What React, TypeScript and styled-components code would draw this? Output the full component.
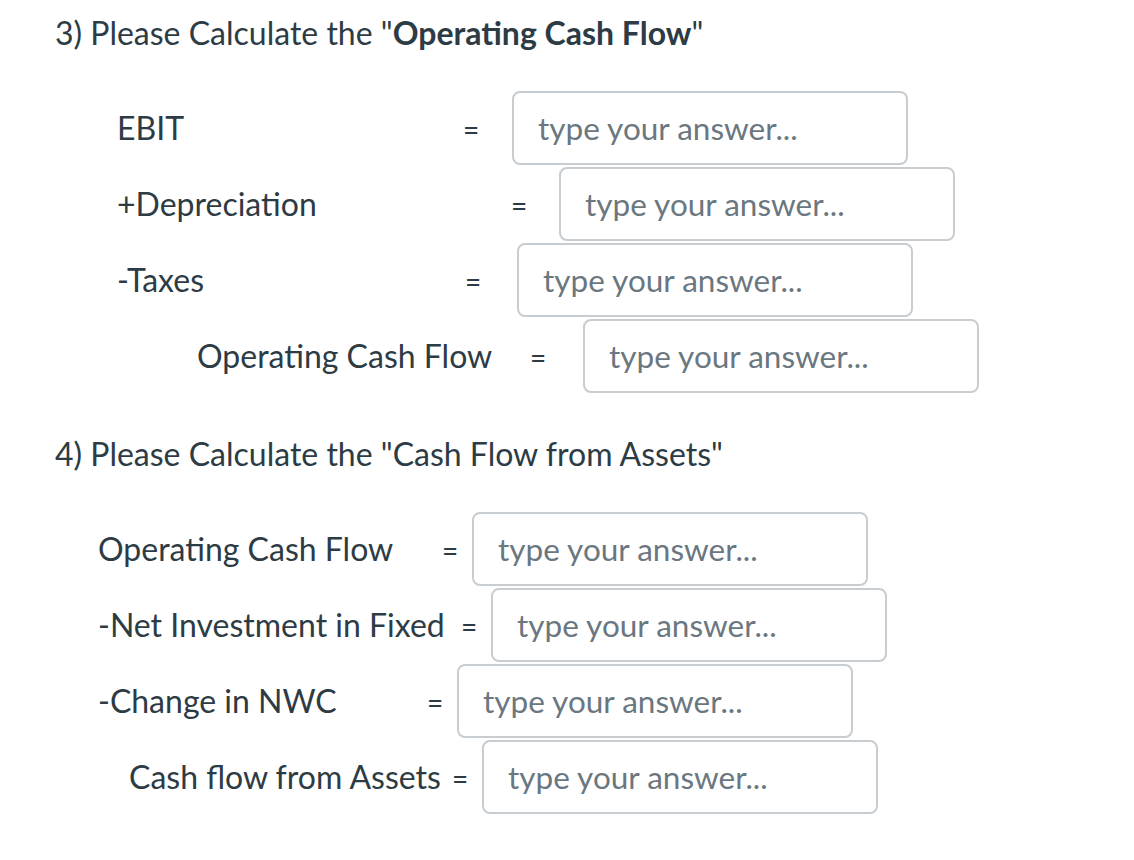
import React from 'react';
import styled, { createGlobalStyle } from 'styled-components';

interface RowData {
  label: string;
  indent: number;
  eq: number;
  input: number;
}

const cashFlowRows: RowData[] = [
  { label: 'EBIT', indent: 117, eq: 463, input: 512 },
  { label: '+Depreciation', indent: 117, eq: 511, input: 559 },
  { label: '-Taxes', indent: 117, eq: 465, input: 517 },
  { label: 'Operating Cash Flow', indent: 197, eq: 530, input: 583 },
];

const assetRows: RowData[] = [
  { label: 'Operating Cash Flow', indent: 98, eq: 442, input: 472 },
  { label: '-Net Investment in Fixed', indent: 98, eq: 461, input: 491 },
  { label: '-Change in NWC', indent: 98, eq: 427, input: 457 },
  { label: 'Cash flow from Assets', indent: 129, eq: 452, input: 482 },
];

const EQ_WIDTH = 16;

function AnswerRow({ row }: { row: RowData }) {
  return (
    <Row $indent={row.indent}>
      <Label $width={row.eq - row.indent}>{row.label}</Label>
      <Equals>=</Equals>
      <AnswerInput $offset={row.input - row.eq - EQ_WIDTH} placeholder='type your answer...' />
    </Row>
  );
}

export default function App() {
  return (
    <>
      <GlobalStyle />
      <Page>
        <Title>
          3) Please Calculate the "<b>Operating Cash Flow</b>"
        </Title>
        <Rows>
          {cashFlowRows.map((row, i) => (
            <AnswerRow row={row} key={i} />
          ))}
        </Rows>
        <Title $top={41}>4) Please Calculate the "Cash Flow from Assets"</Title>
        <Rows $top={38}>
          {assetRows.map((row, i) => (
            <AnswerRow row={row} key={i} />
          ))}
        </Rows>
      </Page>
    </>
  );
}

const GlobalStyle = createGlobalStyle`
  body {
    margin: 0;
    background: #fff;
    font-family: Lato, "Liberation Sans", sans-serif;
    color: #2d3b45;
  }
`;

const Page = styled.div`
  padding: 13px 0 0 0;
`;

const Title = styled.h2<{ $top?: number }>`
  margin: ${({ $top }) => $top ?? 0}px 0 0 55px;
  font-size: 32px;
  font-weight: 400;
  line-height: 40px;
  white-space: nowrap;

  b {
    font-weight: 700;
  }
`;

const Rows = styled.div<{ $top?: number }>`
  display: flex;
  flex-direction: column;
  gap: 2px;
  margin-top: ${({ $top }) => $top ?? 38}px;
`;

const Row = styled.div<{ $indent: number }>`
  display: flex;
  align-items: baseline;
  padding-left: ${({ $indent }) => $indent}px;
  font-size: 32px;
`;

const Label = styled.span<{ $width: number }>`
  width: ${({ $width }) => $width}px;
  flex-shrink: 0;
  white-space: nowrap;
`;

const Equals = styled.span`
  width: ${EQ_WIDTH}px;
  text-align: center;
  font-size: 28px;
`;

const AnswerInput = styled.input<{ $offset: number }>`
  box-sizing: border-box;
  width: 396px;
  height: 74px;
  margin-left: ${({ $offset }) => $offset}px;
  padding: 0 24px;
  border: 2px solid #c7cdd1;
  border-radius: 8px;
  background: #fff;
  font-family: Lato, "Liberation Sans", sans-serif;
  font-size: 31.5px;
  color: #2d3b45;
  outline: none;

  &::placeholder {
    color: #6b7780;
    opacity: 1;
  }
`;
